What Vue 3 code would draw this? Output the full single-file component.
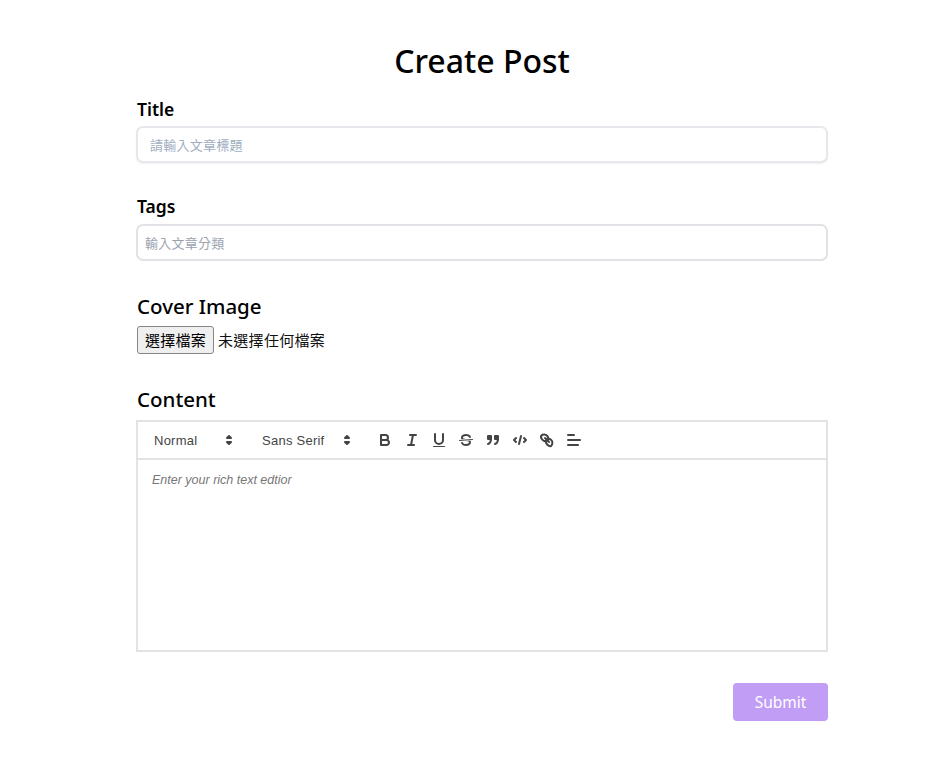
<script setup>
</script>

<template>
  <main class="page">
    <h1 class="title">Create Post</h1>
    <form class="form" @submit.prevent>
      <label class="label small">Title</label>
      <input class="field title-field" type="text" placeholder="請輸入文章標題" />
      <label class="label small tags-label">Tags</label>
      <input class="field tags-field" type="text" placeholder="輸入文章分類" />
      <label class="label cover-label">Cover Image</label>
      <div class="file-row">
        <button class="file-btn" type="button">選擇檔案</button>
        <span class="file-text">未選擇任何檔案</span>
      </div>
      <label class="label content-label">Content</label>
      <div class="editor">
        <div class="toolbar">
          <div class="picker picker-header">
            <span>Normal</span>
            <svg viewBox="0 0 18 18" class="arrow"><polygon points="7 11 9 13 11 11 7 11" /><polygon points="7 7 9 5 11 7 7 7" /></svg>
          </div>
          <div class="picker picker-font">
            <span>Sans Serif</span>
            <svg viewBox="0 0 18 18" class="arrow"><polygon points="7 11 9 13 11 11 7 11" /><polygon points="7 7 9 5 11 7 7 7" /></svg>
          </div>
          <div class="tools">
            <button type="button" class="tool"><svg viewBox="0 0 18 18"><path d="M5,4H9.5A2.5,2.5,0,0,1,12,6.5v0A2.5,2.5,0,0,1,9.5,9H5A0,0,0,0,1,5,9V4A0,0,0,0,1,5,4Z" /><path d="M5,9h5.5A2.5,2.5,0,0,1,13,11.5v0A2.5,2.5,0,0,1,10.5,14H5a0,0,0,0,1,0,0V9A0,0,0,0,1,5,9Z" /></svg></button>
            <button type="button" class="tool"><svg viewBox="0 0 18 18"><line x1="7" x2="13" y1="4" y2="4" /><line x1="5" x2="11" y1="14" y2="14" /><line x1="8" x2="10" y1="14" y2="4" /></svg></button>
            <button type="button" class="tool"><svg viewBox="0 0 18 18"><path d="M5,3V9a4.012,4.012,0,0,0,4,4H9a4.012,4.012,0,0,0,4-4V3" /><rect class="fill" height="1" rx="0.5" ry="0.5" width="12" x="3" y="15" /></svg></button>
            <button type="button" class="tool"><svg viewBox="0 0 18 18"><line class="thin" x1="15.5" x2="2.5" y1="8.5" y2="9.5" /><path class="fill" d="M9.007,8C6.542,7.791,6,7.519,6,6.5,6,5.792,7.283,5,9,5c1.571,0,2.765.679,2.969,1.309a1,1,0,0,0,1.9-.617C13.356,4.106,11.354,3,9,3,6.2,3,4,4.538,4,6.5a3.2,3.2,0,0,0,.5,1.843Z" /><path class="fill" d="M8.984,10C11.457,10.208,12,10.479,12,11.5c0,.708-1.283,1.5-3,1.5-1.571,0-2.765-.679-2.969-1.309a1,1,0,1,0-1.9.617C4.644,13.894,6.646,15,9,15c2.8,0,5-1.538,5-3.5a3.2,3.2,0,0,0-.5-1.843Z" /></svg></button>
            <button type="button" class="tool"><svg viewBox="0 0 18 18"><rect class="solid" height="3" width="3" x="4" y="5" /><rect class="solid" height="3" width="3" x="11" y="5" /><path d="M7,8c0,4.031-3,5-3,5" /><path d="M14,8c0,4.031-3,5-3,5" /></svg></button>
            <button type="button" class="tool"><svg viewBox="0 0 18 18"><polyline points="5 7 3 9 5 11" /><polyline points="13 7 15 9 13 11" /><line x1="10" x2="8" y1="5" y2="13" /></svg></button>
            <button type="button" class="tool"><svg viewBox="0 0 18 18"><line x1="7" x2="11" y1="7" y2="11" /><path d="M8.9,4.577a3.476,3.476,0,0,1,.36,4.679A3.476,3.476,0,0,1,4.577,8.9C3.185,7.5,2.206,6.016,3.5,4.5S7.5,3.185,8.9,4.577Z" /><path d="M13.423,9.1a3.476,3.476,0,0,0-4.679-.36,3.476,3.476,0,0,0,.36,4.679c1.392,1.392,2.5,2.415,4,1.392S14.815,10.5,13.423,9.1Z" /></svg></button>
            <button type="button" class="tool"><svg viewBox="0 0 18 18"><line x1="3" x2="15" y1="9" y2="9" /><line x1="3" x2="13" y1="14" y2="14" /><line x1="3" x2="9" y1="4" y2="4" /></svg></button>
          </div>
        </div>
        <div class="editor-body"><em>Enter your rich text edtior</em></div>
      </div>
      <div class="actions">
        <button class="submit" type="submit">Submit</button>
      </div>
    </form>
  </main>
</template>

<style scoped>
.page {
  width: 692px;
  margin-left: 136px;
  padding-top: 39px;
  font-family: "Noto Sans", "Noto Sans CJK TC", sans-serif;
  color: #000;
}
.title {
  margin: 0;
  text-align: center;
  font-size: 32px;
  line-height: 44px;
  font-weight: 500;
}
.form {
  display: flex;
  flex-direction: column;
  margin-top: 15px;
}
.label {
  display: block;
  padding-left: 1px;
  margin-bottom: 2px;
  font-size: 20.5px;
  line-height: 26px;
  font-weight: 500;
  color: #000;
}
.label.small {
  font-size: 17.5px;
  line-height: 22px;
  font-weight: 600;
}
.field {
  box-sizing: border-box;
  width: 100%;
  border: 2px solid #e6e8ee;
  border-radius: 7px;
  background: #fff;
  outline: none;
  padding-bottom: 2px;
  font-family: "Noto Sans CJK TC", sans-serif;
  font-size: 13px;
  letter-spacing: 0.25px;
}
.field::placeholder {
  color: #a0aec0;
}
.title-field {
  height: 37px;
  margin-top: 4px;
  padding-left: 12px;
  padding-right: 12px;
  box-shadow: 0 1px 2px rgba(0, 0, 0, 0.06);
}
.tags-label {
  margin-top: 32px;
}
.tags-field {
  height: 37px;
  margin-top: 5px;
  padding-left: 7px;
  padding-right: 7px;
  border-color: #e2e2e6;
}
.tags-field::placeholder {
  color: #9ca3af;
}
.cover-label {
  margin-top: 32px;
}
.file-row {
  display: flex;
  align-items: center;
  gap: 4px;
  margin-top: 5px;
  margin-left: 1px;
}
.file-btn {
  box-sizing: border-box;
  width: 77px;
  height: 28px;
  padding: 0 0 2px;
  border: 1px solid #858585;
  border-radius: 3px;
  background: #efefef;
  color: #000;
  font-family: "Noto Sans CJK TC", sans-serif;
  font-size: 15px;
  letter-spacing: 0.2px;
}
.file-text {
  padding-bottom: 2px;
  font-family: "Noto Sans CJK TC", sans-serif;
  font-size: 15px;
  letter-spacing: 0.3px;
  color: #111;
}
.label.content-label {
  margin-top: 33px;
  margin-bottom: 4px;
  line-height: 24px;
}
.editor {
  box-sizing: border-box;
  margin-top: 5px;
  height: 232px;
  border: 2px solid #e3e3e5;
  display: flex;
  flex-direction: column;
}
.toolbar {
  box-sizing: border-box;
  height: 38px;
  padding: 0 0 0 8px;
  display: flex;
  align-items: center;
  border-bottom: 2px solid #e3e3e5;
  color: #444;
  font-size: 13px;
  font-family: "Liberation Sans", sans-serif;
}
.picker {
  box-sizing: border-box;
  padding-left: 8px;
  display: flex;
  align-items: center;
  justify-content: space-between;
  flex: none;
  letter-spacing: 0.25px;
}
.picker-header {
  width: 92px;
}
.picker-font {
  width: 102px;
  margin-left: 16px;
}
.arrow {
  width: 18px;
  height: 18px;
}
.arrow polygon {
  fill: none;
  stroke: #444;
  stroke-width: 2;
  stroke-linejoin: round;
}
.tools {
  display: flex;
  margin-left: 15px;
}
.tool {
  box-sizing: border-box;
  width: 27px;
  height: 24px;
  padding: 3px 5px;
  margin: 0;
  background: none;
  border: 0;
  display: block;
}
.tool svg {
  display: block;
  width: 18px;
  height: 18px;
}
.tool svg * {
  fill: none;
  stroke: #444;
  stroke-width: 2;
  stroke-linecap: round;
  stroke-linejoin: round;
}
.tool svg .fill {
  fill: #444;
  stroke: none;
}
.tool svg .solid {
  fill: #444;
}
.tool svg .thin {
  stroke-width: 1;
}
.editor-body {
  flex: 1;
  padding: 12px 14px;
  font-family: "Liberation Sans", sans-serif;
  font-size: 12.5px;
  line-height: 16px;
  color: #777;
}
.actions {
  display: flex;
  justify-content: flex-end;
  margin-top: 31px;
}
.submit {
  box-sizing: border-box;
  width: 95px;
  height: 38px;
  border: 0;
  border-radius: 4px;
  background: #c19df5;
  color: #fff;
  font-family: "Noto Sans", sans-serif;
  font-size: 15.5px;
}
</style>
